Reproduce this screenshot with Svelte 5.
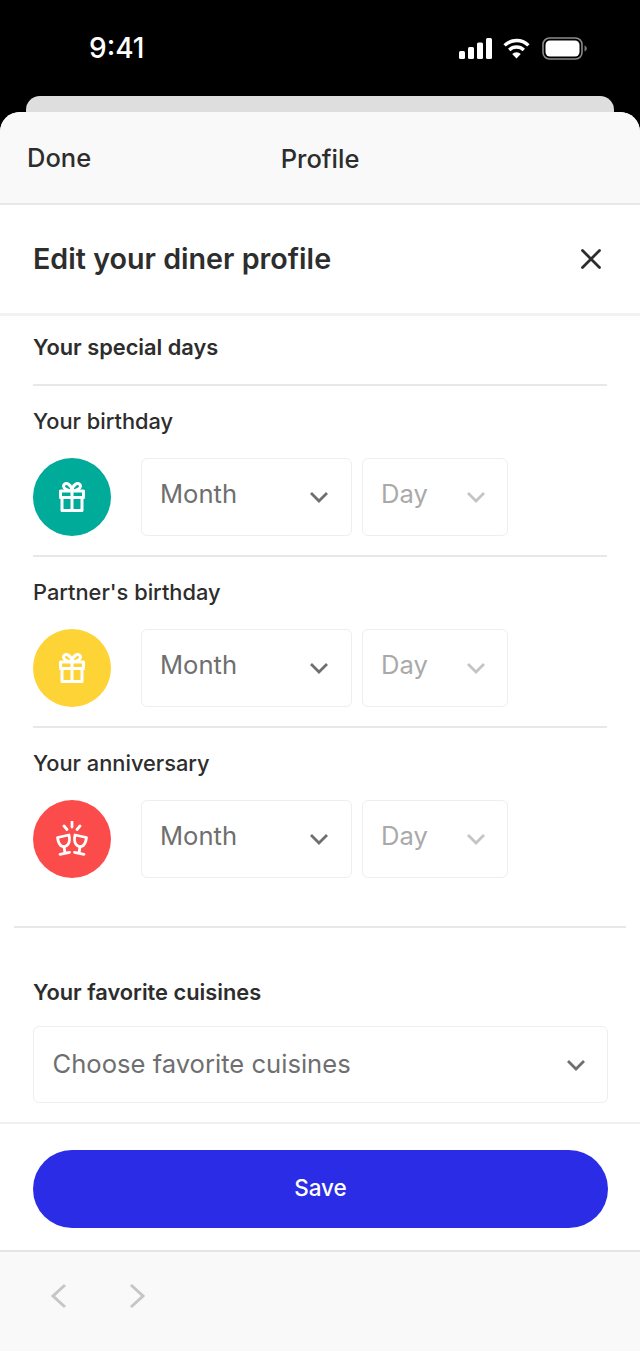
<script>
  const rows = [
    { label: 'Your birthday', cls: 'teal', icon: 'gift' },
    { label: "Partner's birthday", cls: 'yellow', icon: 'gift' },
    { label: 'Your anniversary', cls: 'red', icon: 'glasses' }
  ];
</script>

<div class="screen">
  <div class="status">
    <span class="time">9:41</span>
    <div class="indicators">
      <svg width="33" height="21" viewBox="0 0 33 21" fill="#fff"><rect x="0" y="13" width="6" height="8" rx="1.5"/><rect x="9" y="9" width="6" height="12" rx="1.5"/><rect x="18" y="4.500" width="6" height="16.500" rx="1.500"/><rect x="27" y="0" width="6" height="21" rx="1.500"/></svg>
      <svg class="wifi" width="27" height="21" viewBox="0 0 27 21" fill="none" stroke="#fff" stroke-width="3.400"><path d="M1.600 7.400a17 17 0 0 1 23.800 0"/><path d="M6.200 12a10.500 10.500 0 0 1 14.600 0"/><path d="M13.500 20.500l-4.300-4.400a6 6 0 0 1 8.600 0z" fill="#fff" stroke="none"/></svg>
      <svg width="45" height="23" viewBox="0 0 45 23"><rect x="1" y="1" width="39" height="21" rx="6.500" fill="none" stroke="#8a8a8a" stroke-width="1.600"/><rect x="3.500" y="3.500" width="34" height="16" rx="4.500" fill="#fff"/><path d="M42.500 8.500c1.500.5 2.300 1.700 2.300 3s-.8 2.500-2.300 3z" fill="#777"/></svg>
    </div>
  </div>

  <div class="back-sheet"></div>

  <div class="sheet">
    <header class="topbar">
      <span class="done">Done</span>
      <span class="profile">Profile</span>
    </header>

    <div class="modal-head">
      <h1>Edit your diner profile</h1>
      <svg class="close" width="24" height="24" viewBox="0 0 24 24" fill="none" stroke="#2d2d2d" stroke-width="2.800" stroke-linecap="round"><path d="M3.500 3.500l17 17M20.500 3.500l-17 17"/></svg>
    </div>

    <main class="content">
      <h2 class="days-title">Your special days</h2>

      {#each rows as row}
        <section class="day-row">
          <div class="row-label">{row.label}</div>
          <div class="controls">
            <div class="circle {row.cls}">
              {#if row.icon === 'gift'}
                <svg width="26" height="30" viewBox="0 0 26 30" fill="none" stroke="#fff" stroke-width="3" stroke-linejoin="round"><path d="M13 9C9.500 8.500 4.500 7 4.500 4 4.500 1.800 7.500 .8 9.500 2.200 11.500 3.600 13 6 13 9zM13 9c3.500-.5 8.500-2 8.500-5 0-2.200-3-3.200-5-1.800C14.500 3.600 13 6 13 9z"/><rect x="1.500" y="9" width="23" height="6.500"/><rect x="3" y="15.500" width="20" height="13"/><path d="M13 9v19.500"/></svg>
              {:else}
                <svg width="32" height="36" viewBox="0 0 32 36" fill="none" stroke="#fff" stroke-width="2.800" stroke-linecap="round" stroke-linejoin="round"><path d="M16 1v5M8 5l3 3.500M24 5l-3 3.500"/><path d="M1.500 16.500L13 14c1 4.500.5 10-4 11.500C4 26.500 2 21 1.500 16.500z"/><path d="M30.500 16.500L19 14c-1 4.500-.5 10 4 11.500 5 1 7-4.500 7.500-9z"/><path d="M8 26l1 6M4 33.300l9.500-2M24 26l-1 6M28 33.300l-9.500-2"/></svg>
              {/if}
            </div>
            <div class="select month">
              <span>Month</span>
              <svg class="chev" width="20" height="12" viewBox="0 0 20 12" fill="none" stroke="#6f6f6f" stroke-width="2.800"><path d="M2 2l8 8 8-8"/></svg>
            </div>
            <div class="select day">
              <span>Day</span>
              <svg class="chev" width="20" height="12" viewBox="0 0 20 12" fill="none" stroke="#c4c4c4" stroke-width="2.800"><path d="M2 2l8 8 8-8"/></svg>
            </div>
          </div>
        </section>
      {/each}

      <hr class="wide" />

      <h2 class="cuisines-title">Your favorite cuisines</h2>
      <div class="select cuisines">
        <span>Choose favorite cuisines</span>
        <svg class="chev" width="20" height="12" viewBox="0 0 20 12" fill="none" stroke="#6f6f6f" stroke-width="2.800"><path d="M2 2l8 8 8-8"/></svg>
      </div>
    </main>

    <div class="actions">
      <button class="save">Save</button>
    </div>

    <footer class="toolbar">
      <svg width="18" height="26" viewBox="0 0 18 26" fill="none" stroke="#c6c6c6" stroke-width="3"><path d="M15 2L3 13l12 11"/></svg>
      <svg width="18" height="26" viewBox="0 0 18 26" fill="none" stroke="#c6c6c6" stroke-width="3"><path d="M3 2l12 11L3 24"/></svg>
    </footer>
  </div>
</div>

<style>
  :global(body) {
    margin: 0;
    background: #000;
  }
  .screen {
    width: 640px;
    height: 1351px;
    background: #000;
    font-family: Inter, "Liberation Sans", sans-serif;
    color: #2d2d2d;
    display: flex;
    flex-direction: column;
    overflow: hidden;
  }
  .status {
    height: 96px;
    box-sizing: border-box;
    padding: 33px 53px 0 89px;
    display: flex;
    justify-content: space-between;
    align-items: flex-start;
    flex: none;
  }
  .time {
    color: #fff;
    font-size: 28px;
    line-height: 30px;
    font-weight: 500;
  }
  .indicators {
    display: flex;
    align-items: center;
    gap: 11px;
    height: 30px;
  }
  .wifi {
    margin-right: 1px;
  }
  .back-sheet {
    height: 16px;
    margin: 0 26px;
    background: #dedede;
    border-radius: 14px 14px 0 0;
    flex: none;
  }
  .sheet {
    flex: 1;
    background: #fff;
    border-radius: 20px 20px 0 0;
    display: flex;
    flex-direction: column;
    overflow: hidden;
  }
  .topbar {
    height: 93px;
    box-sizing: border-box;
    padding-top: 2px;
    background: #f9f9f9;
    border-bottom: 2px solid #e8e8e8;
    flex: none;
    display: flex;
    align-items: center;
    justify-content: center;
    position: relative;
    font-size: 25.500px;
    font-weight: 500;
  }
  .done {
    position: absolute;
    left: 27px;
    top: 31px;
    line-height: 30px;
  }
  .modal-head {
    height: 111px;
    flex: none;
    box-sizing: border-box;
    padding: 0 37px 0 33px;
    display: flex;
    align-items: center;
    justify-content: space-between;
    border-bottom: 3px solid #f2f2f2;
  }
  h1 {
    margin: 0;
    font-size: 28.700px;
    font-weight: 600;
    line-height: 36px;
  }
  .content {
    flex: 1;
    padding: 0 33px;
    min-height: 0;
  }
  h2 {
    margin: 0;
    font-size: 21.800px;
    font-weight: 600;
    line-height: 30px;
  }
  .days-title {
    padding-top: 16px;
    height: 52px;
  }
  .day-row {
    border-top: 2px solid #e8e8e8;
    height: 171px;
    padding-top: 20px;
    box-sizing: border-box;
  }
  .row-label {
    font-size: 21.800px;
    font-weight: 500;
    line-height: 30px;
    height: 52px;
  }
  .controls {
    display: flex;
    gap: 10px;
    align-items: flex-start;
  }
  .circle {
    width: 78px;
    height: 78px;
    border-radius: 50%;
    display: flex;
    align-items: center;
    justify-content: center;
    margin-right: 20px;
    flex: none;
  }
  .teal { background: #00ab9a; }
  .yellow { background: #fdd335; }
  .red { background: #fb4b4b; }
  .select {
    box-sizing: border-box;
    height: 78px;
    border: 1px solid #eeeeee;
    border-radius: 6px;
    background: #fff;
    display: flex;
    align-items: center;
    justify-content: space-between;
    font-size: 25.600px;
    color: #6f6f6f;
    flex: none;
  }
  .select span {
    margin-top: -8px;
  }
  .month {
    width: 211px;
    padding: 0 22px 0 18px;
  }
  .day {
    width: 146px;
    padding: 0 21px 0 18px;
    color: #a9a9a9;
  }
  .wide {
    border: 0;
    border-top: 2px solid #e8e8e8;
    margin: 29px -19px 0;
  }
  .cuisines-title {
    margin-top: 49px;
    height: 49px;
  }
  .select.cuisines {
    width: 575px;
    padding: 0 21px 0 18.500px;
    height: 77px;
  }
  .select.cuisines span {
    margin-top: -2px;
  }
  .actions {
    height: 130px;
    flex: none;
    box-sizing: border-box;
    padding: 26px 33px 0;
    border-top: 2px solid #f0f0f0;
    border-bottom: 2px solid #e4e4e4;
  }
  .save {
    width: 575px;
    height: 78px;
    border: 0;
    border-radius: 39px;
    background: #2b2ce6;
    color: #fff;
    font: 500 22.500px Inter, "Liberation Sans", sans-serif;
    padding: 0 0 3px;
  }
  .toolbar {
    height: 99px;
    flex: none;
    background: #f9f9f9;
    display: flex;
    align-items: flex-start;
    gap: 60px;
    padding: 31px 0 0 50px;
    box-sizing: border-box;
  }
</style>
